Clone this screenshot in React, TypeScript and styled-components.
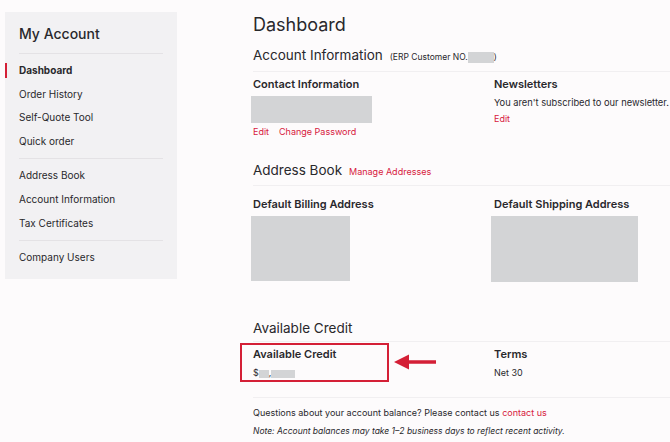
import styled, { createGlobalStyle, css } from 'styled-components';

const GlobalStyle = createGlobalStyle`
  body {
    margin: 0;
    background: #fdfbfc;
    font-family: 'Inter', 'Noto Sans', sans-serif;
    color: #29282c;
  }
`;

const Page = styled.div`
  display: flex;
  align-items: flex-start;
  width: 670px;
  height: 442px;
  overflow: hidden;
`;

const Sidebar = styled.nav`
  width: 172px;
  margin: 12px 0 0 5px;
  padding: 12px 14px 9px 0;
  box-sizing: border-box;
  background: #f2f1f3;
`;

const SidebarTitle = styled.div`
  margin: 0 0 0 14px;
  padding-bottom: 9px;
  font-size: 14px;
  line-height: 20px;
  font-weight: 500;
  border-bottom: 1px solid #e4e2e5;
`;

const NavGroup = styled.ul`
  list-style: none;
  margin: 0 0 0 14px;
  padding: 5px 0;
  border-bottom: 1px solid #e4e2e5;

  &:last-child {
    border-bottom: none;
    padding-bottom: 0;
  }
`;

const NavItem = styled.li<{ $active?: boolean }>`
  position: relative;
  font-size: 10px;
  line-height: 23.6px;
  font-weight: ${({ $active }) => ($active ? 700 : 400)};

  ${({ $active }) =>
    $active &&
    css`
      &::before {
        content: '';
        position: absolute;
        left: -14px;
        top: 4px;
        width: 2px;
        height: 15px;
        background: #d41f36;
      }
    `}
`;

const Main = styled.main`
  flex: 1;
  min-width: 0;
  margin-left: 76px;
  padding-top: 13px;
`;

const PageTitle = styled.h1`
  margin: 0 0 8px;
  font-size: 18px;
  line-height: 24px;
  font-weight: 400;
`;

const SectionHead = styled.div<{ $top?: number; $pad?: number }>`
  display: flex;
  align-items: baseline;
  gap: 7px;
  margin-top: ${({ $top }) => $top ?? 0}px;
  padding-bottom: ${({ $pad }) => $pad ?? 5}px;
  border-bottom: 1px solid #f1eff1;
`;

const SectionTitle = styled.h2`
  margin: 0;
  font-size: 13.5px;
  line-height: 20px;
  font-weight: 400;
`;

const ErpNote = styled.span`
  font-size: 8.5px;
  display: inline-flex;
  align-items: center;
`;

const Masked = styled.span<{ $w: number; $h: number }>`
  display: inline-block;
  width: ${({ $w }) => $w}px;
  height: ${({ $h }) => $h}px;
  background: #d3d4d6;
  vertical-align: middle;
`;

const Row = styled.div`
  display: grid;
  grid-template-columns: 241px 1fr;
  align-items: start;
`;

const Cell = styled.div<{ $highlight?: boolean; $top?: number }>`
  padding-top: ${({ $top }) => $top ?? 4}px;

  ${({ $highlight }) =>
    $highlight &&
    css`
      margin: 1px 0 0 -13px;
      width: 149px;
      box-sizing: border-box;
      padding: 1px 11px 0;
      border: 2px solid #d41f36;
    `}
`;

const CellTitle = styled.h3`
  margin: 0 0 4px;
  font-size: 11px;
  line-height: 16px;
  font-weight: 600;
`;

const Text = styled.p<{ $size?: number }>`
  margin: 0;
  font-size: ${({ $size }) => $size ?? 9}px;
  line-height: 14px;
  white-space: nowrap;
`;

const LinkRow = styled.div`
  display: flex;
  gap: 10px;
  margin-top: 1px;
`;

const RedLink = styled.a<{ $size?: number }>`
  color: #d7203d;
  font-size: ${({ $size }) => $size ?? 9}px;
  line-height: 15px;
  text-decoration: none;
`;

const Placeholder = styled.div<{ $w: number; $h: number; $shift?: number; $top?: number }>`
  width: ${({ $w }) => $w}px;
  height: ${({ $h }) => $h}px;
  margin-left: ${({ $shift }) => $shift ?? -2}px;
  margin-top: ${({ $top }) => $top ?? 0}px;
  background: #d3d4d6;
`;

const CreditRow = styled(Row)`
  position: relative;
  padding-bottom: 15px;
  border-bottom: 1px solid #f1eff1;
`;

const ArrowMark = styled.svg`
  position: absolute;
  left: 141px;
  top: 11px;
`;

const Footer = styled.div`
  padding-top: 7px;
`;

const FooterLine = styled.p<{ $italic?: boolean }>`
  margin: 0 0 4px;
  line-height: 15px;
  white-space: nowrap;
  font-style: ${({ $italic }) => ($italic ? 'italic' : 'normal')};
  font-size: ${({ $italic }) => ($italic ? 8.5 : 9)}px;
`;

const App = () => {
  return (
    <>
      <GlobalStyle />
      <Page>
        <Sidebar>
          <SidebarTitle>My Account</SidebarTitle>
          <NavGroup>
            <NavItem $active>Dashboard</NavItem>
            <NavItem>Order History</NavItem>
            <NavItem>Self-Quote Tool</NavItem>
            <NavItem>Quick order</NavItem>
          </NavGroup>
          <NavGroup>
            <NavItem>Address Book</NavItem>
            <NavItem>Account Information</NavItem>
            <NavItem>Tax Certificates</NavItem>
          </NavGroup>
          <NavGroup>
            <NavItem>Company Users</NavItem>
          </NavGroup>
        </Sidebar>

        <Main>
          <PageTitle>Dashboard</PageTitle>

          <SectionHead $pad={6}>
            <SectionTitle>Account Information</SectionTitle>
            <ErpNote>
              (ERP Customer NO.
              <Masked $w={26} $h={11} />)
            </ErpNote>
          </SectionHead>
          <Row>
            <Cell>
              <CellTitle>Contact Information</CellTitle>
              <Placeholder $w={121} $h={27} />
              <LinkRow>
                <RedLink>Edit</RedLink>
                <RedLink>Change Password</RedLink>
              </LinkRow>
            </Cell>
            <Cell>
              <CellTitle>Newsletters</CellTitle>
              <Text $size={9.3}>You aren't subscribed to our newsletter.</Text>
              <LinkRow>
                <RedLink>Edit</RedLink>
              </LinkRow>
            </Cell>
          </Row>

          <SectionHead $top={21}>
            <SectionTitle>Address Book</SectionTitle>
            <RedLink>Manage Addresses</RedLink>
          </SectionHead>
          <Row>
            <Cell $top={10}>
              <CellTitle>Default Billing Address</CellTitle>
              <Placeholder $w={99} $h={65} $top={4} />
            </Cell>
            <Cell $top={10}>
              <CellTitle>Default Shipping Address</CellTitle>
              <Placeholder $w={147} $h={66} $shift={-3} $top={4} />
            </Cell>
          </Row>

          <SectionHead $top={36} $pad={3}>
            <SectionTitle>Available Credit</SectionTitle>
          </SectionHead>
          <CreditRow>
            <Cell $highlight>
              <CellTitle>Available Credit</CellTitle>
              <Text>
                $<Masked $w={10} $h={8} />,<Masked $w={24} $h={8} />
              </Text>
            </Cell>
            <Cell>
              <CellTitle>Terms</CellTitle>
              <Text>Net 30</Text>
            </Cell>
            <ArrowMark width="44" height="18" viewBox="0 0 44 18">
              <path d="M0 9 L15 1.5 L15 7.2 L42 7.2 L42 10.8 L15 10.8 L15 16.5 Z" fill="#d41f36" />
            </ArrowMark>
          </CreditRow>

          <Footer>
            <FooterLine>
              Questions about your account balance? Please contact us <RedLink>contact us</RedLink>
            </FooterLine>
            <FooterLine $italic>
              Note: Account balances may take 1–2 business days to reflect recent activity.
            </FooterLine>
          </Footer>
        </Main>
      </Page>
    </>
  );
};

export default App;
